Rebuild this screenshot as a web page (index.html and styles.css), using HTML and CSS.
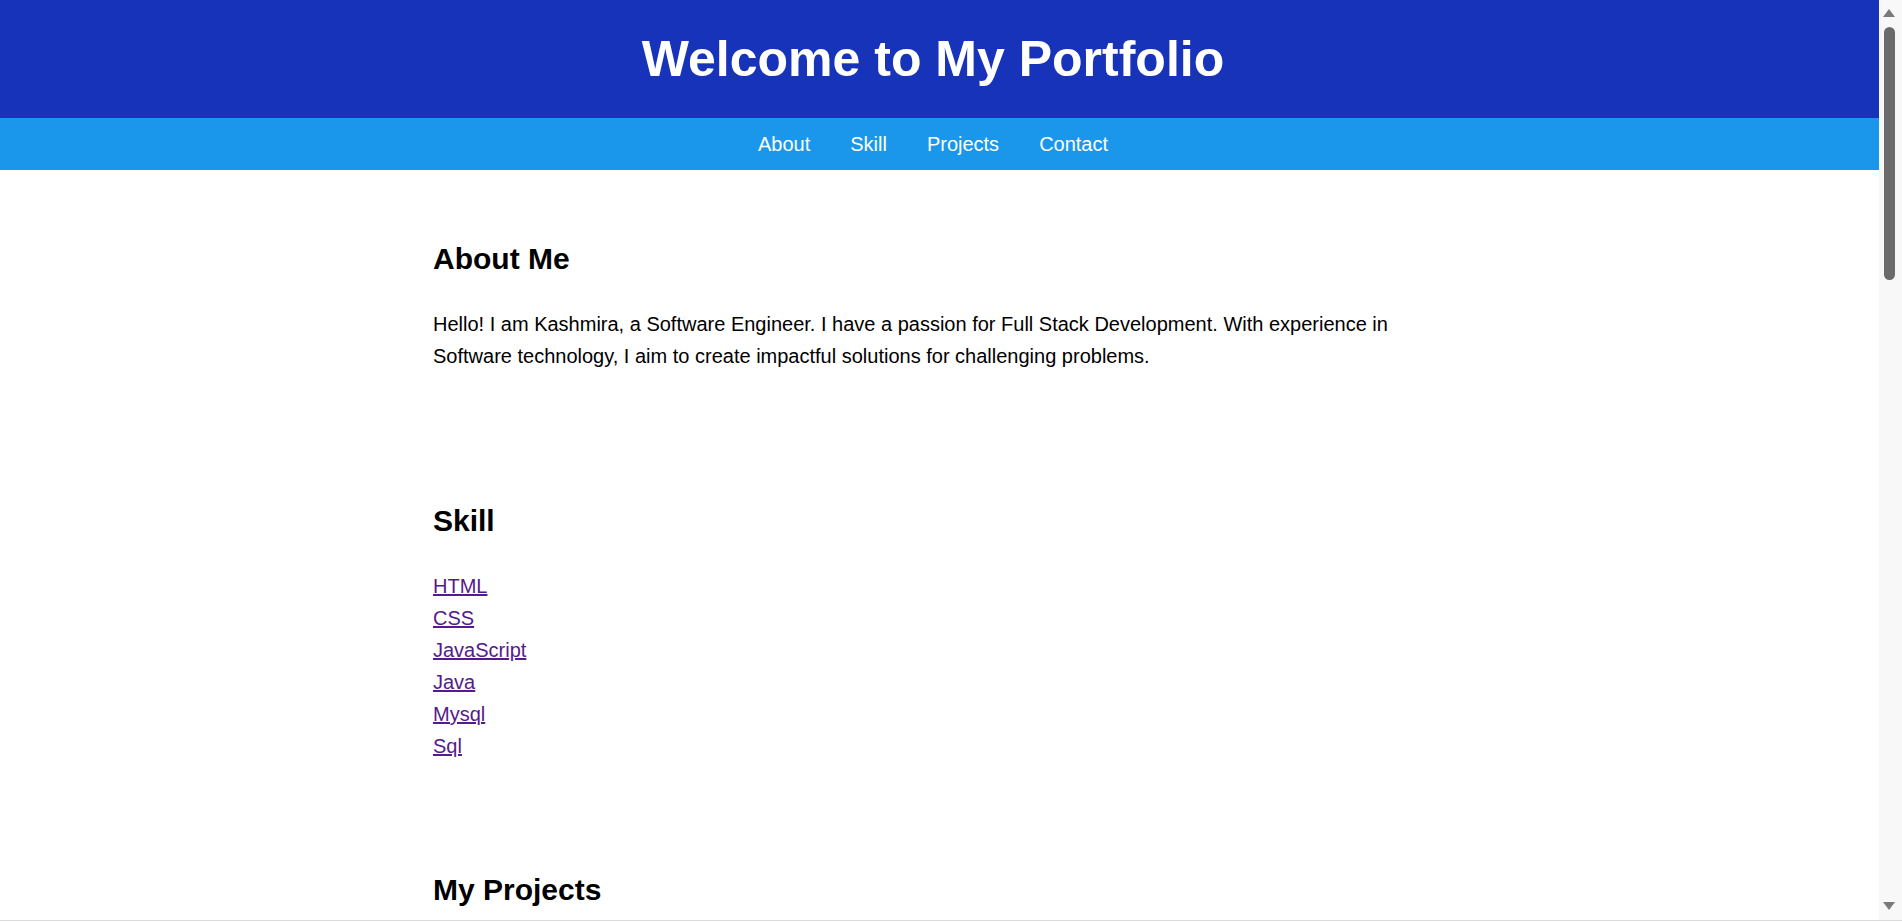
FILE: index.html
```html
<!DOCTYPE html>
<html lang="en">
<head>
<meta charset="utf-8">
<title>My Portfolio</title>
<link rel="stylesheet" href="styles.css">
</head>
<body>
<header class="site-header">
  <h1 class="site-title">Welcome to My Portfolio</h1>
</header>
<nav class="site-nav">
  <a class="nav-link" href="#about">About</a>
  <a class="nav-link" href="#skill">Skill</a>
  <a class="nav-link" href="#projects">Projects</a>
  <a class="nav-link" href="#contact">Contact</a>
</nav>
<main class="content">
  <section class="section section-about" id="about">
    <h2 class="section-title">About Me</h2>
    <p class="section-text">Hello! I am Kashmira, a Software Engineer. I have a passion for Full Stack Development. With experience in Software technology, I aim to create impactful solutions for challenging problems.</p>
  </section>
  <section class="section" id="skill">
    <h2 class="section-title">Skill</h2>
    <ul class="skill-list">
      <li><a class="skill-link" href="#html">HTML</a></li>
      <li><a class="skill-link" href="#css">CSS</a></li>
      <li><a class="skill-link" href="#javascript">JavaScript</a></li>
      <li><a class="skill-link" href="#java">Java</a></li>
      <li><a class="skill-link" href="#mysql">Mysql</a></li>
      <li><a class="skill-link" href="#sql">Sql</a></li>
    </ul>
  </section>
  <section class="section" id="projects">
    <h2 class="section-title">My Projects</h2>
    <p class="section-text">Project 1: Portfolio Website</p>
    <p class="section-text">Project 2: Task Manager Application</p>
  </section>
  <section class="section" id="contact">
    <h2 class="section-title">Contact</h2>
    <p class="section-text">Email: kashmira@example.com</p>
  </section>
</main>
<div class="scrollbar" aria-hidden="true">
  <svg class="scroll-arrow" width="12" height="8" viewBox="0 0 12 8"><polygon points="6,0 12,8 0,8" fill="#7a7a7a"/></svg>
  <div class="scroll-thumb"></div>
  <div class="scroll-fill"></div>
  <svg class="scroll-arrow" width="12" height="8" viewBox="0 0 12 8"><polygon points="0,0 12,0 6,8" fill="#7a7a7a"/></svg>
</div>
<div class="frame-edge" aria-hidden="true"></div>
</body>
</html>
```
FILE: styles.css
```css
body {
  margin: 0;
  padding-right: 23px;
  font-family: "Liberation Sans", Arial, sans-serif;
  color: #000;
  background: #fff;
}

.site-header {
  height: 118px;
  background: #1633b9;
  display: flex;
  align-items: center;
  justify-content: center;
  padding-right: 13px;
}
.site-title {
  margin: 0;
  color: #fff;
  font-size: 50px;
  line-height: 60px;
  font-weight: bold;
}

.site-nav {
  height: 52px;
  background: #1a96eb;
  display: flex;
  align-items: center;
  justify-content: center;
  gap: 40px;
  padding-right: 13px;
}
.nav-link {
  color: #fff;
  text-decoration: none;
  font-size: 20px;
  line-height: 23px;
}

.content {
  box-sizing: border-box;
  max-width: 1000px;
  margin: 0 auto;
  padding-top: 71px;
  min-height: 3066px;
  position: relative;
  left: -6.5px;
  display: flex;
  flex-direction: column;
  gap: 109px;
}
.section-title {
  margin: 0 0 31px;
  font-size: 30px;
  line-height: 36px;
  font-weight: bold;
}
.section-text {
  margin: 0 0 23px;
  font-size: 20px;
  line-height: 32px;
}
.section-about .section-text {
  margin-bottom: 22px;
}
.skill-list {
  list-style: none;
  margin: 0 0 1px;
  padding: 0;
  font-size: 20px;
  line-height: 32px;
}
.skill-link {
  color: #551a8b;
  text-decoration: underline;
}

/* fake browser scrollbar overlay */
.scrollbar {
  position: fixed;
  top: 0;
  right: 0;
  width: 23px;
  height: 100%;
  box-sizing: border-box;
  padding: 9px 0 12px 4px;
  background: #f8f8f8;
  display: flex;
  flex-direction: column;
}
.scroll-arrow {
  display: block;
  flex: none;
}
.scroll-thumb {
  flex: none;
  margin: 10px 0 0 1px;
  width: 11px;
  height: 253px;
  border-radius: 6px;
  background: #6b6b6b;
}
.scroll-fill {
  flex: 1;
}
.frame-edge {
  position: fixed;
  left: 0;
  right: 0;
  bottom: 0;
  height: 2px;
  background: #fff;
  border-top: 1px solid #dcdcdc;
  box-sizing: border-box;
}
```
